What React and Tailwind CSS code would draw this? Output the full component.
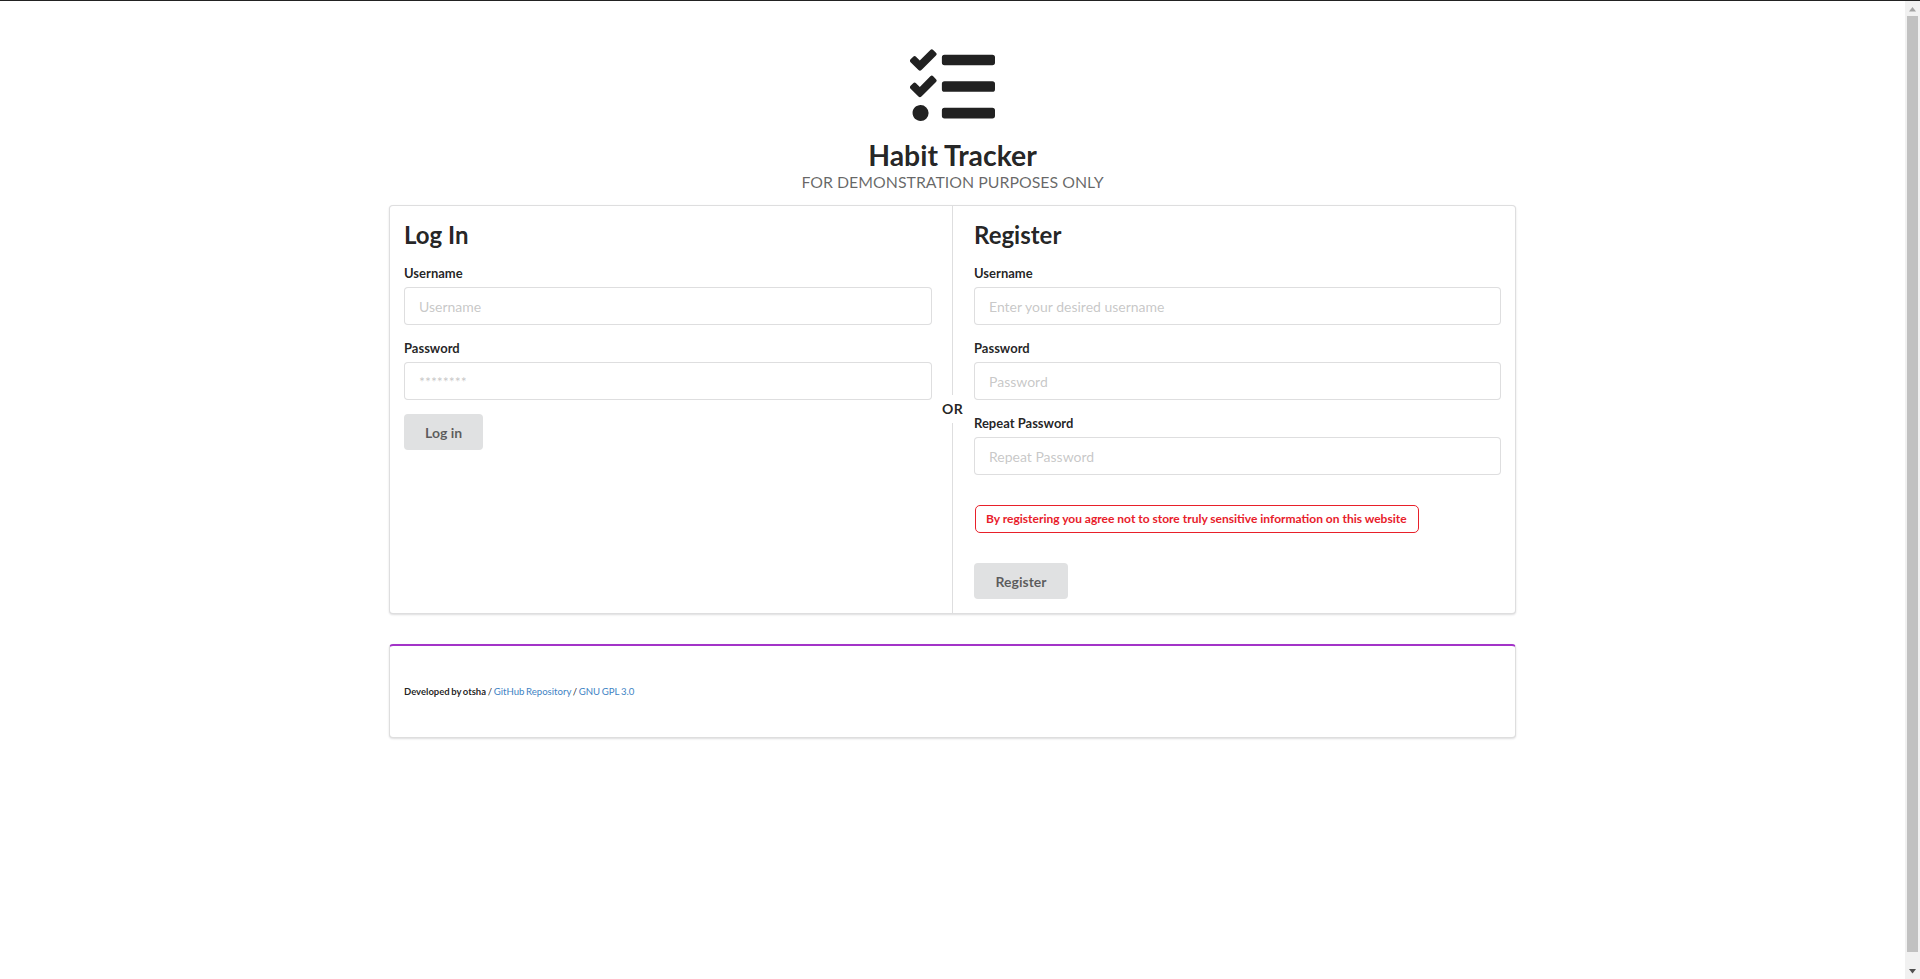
import React from "react";
import { FaTasks } from "react-icons/fa";

const inputCls = "block w-full h-[38px] border border-[rgba(34,36,38,0.15)] rounded-[4px] px-[14px] text-[14px] bg-white outline-none placeholder:text-[rgba(191,191,191,0.87)]";
const labelCls = "block text-[13px] font-bold leading-[18px] mb-[5px] text-[rgba(0,0,0,0.87)]";
const btnCls = "block h-[36px] bg-[#e0e1e2] rounded-[4px] text-[14px] font-bold text-[rgba(0,0,0,0.6)]";
const segCls = "border border-[rgba(34,36,38,0.15)] rounded-[4px] shadow-[0_1px_2px_0_rgba(34,36,38,0.15)] bg-white";

function Field({ label, placeholder, className = "" }) {
  return (
    <div className={className}>
      <label className={labelCls}>{label}</label>
      <input className={inputCls} placeholder={placeholder} readOnly />
    </div>
  );
}

export default function App() {
  return (
    <div className="h-[979px] w-full overflow-hidden flex flex-col bg-white text-[rgba(0,0,0,0.87)] font-['Lato',sans-serif]">
      <div className="h-px bg-[#222] shrink-0" />
      <div className="flex flex-1 min-h-0">
        <main className="flex-1 min-w-0">
          <div className="w-[1127px] mx-auto pt-[43px]">
            <div className="flex flex-col items-center">
              <FaTasks size={85} color="#212121" />
              <h1 className="text-[28.4px] font-bold leading-[36px] mt-[8px]">Habit Tracker</h1>
              <p className="text-[15.9px] leading-[17px] text-[rgba(0,0,0,0.6)] uppercase">For demonstration purposes only</p>
            </div>
            <div className={segCls + " relative flex h-[409px] mt-[15px]"}>
              <section className="w-[562px] pl-[14px] pr-[20px] pt-[14px]">
                <h2 className="text-[24px] font-bold leading-[30px] mb-[14px]">Log In</h2>
                <Field label="Username" placeholder="Username" />
                <Field label="Password" placeholder="********" className="mt-[14px]" />
                <button className={btnCls + " px-[21px] mt-[14px]"}>Log in</button>
              </section>
              <div className="w-px bg-[rgba(34,36,38,0.15)]" />
              <section className="flex-1 pl-[21px] pr-[14px] pt-[14px]">
                <h2 className="text-[24px] font-bold leading-[30px] mb-[14px]">Register</h2>
                <Field label="Username" placeholder="Enter your desired username" />
                <Field label="Password" placeholder="Password" className="mt-[14px]" />
                <Field label="Repeat Password" placeholder="Repeat Password" className="mt-[14px]" />
                <div className="mt-[30px] ml-px inline-block border border-[#e8202a] rounded-[5px] h-[28px] pl-[10px] pr-[11px] text-[12px] leading-[26px] font-bold text-[#e8202a]">
                  By registering you agree not to store truly sensitive information on this website
                </div>
                <button className={btnCls + " w-[94px] mt-[30px]"}>Register</button>
              </section>
              <div className="absolute left-[562.5px] top-[189px] -translate-x-1/2 bg-white h-[28px] py-[4px] text-[14px] font-bold leading-[20px] tracking-[0.3px]">OR</div>
            </div>
            <div className={segCls + " mt-[30px] h-[94px] border-t-2 border-t-[#a333c8] flex items-center px-[14px] pt-[2px]"}>
              <p className="text-[9.6px] [word-spacing:-0.8px]">
                <span className="text-[9.5px] font-bold">Developed by otsha</span> / <a className="text-[#4183c4]">GitHub Repository</a> / <a className="text-[#4183c4]">GNU GPL 3.0</a>
              </p>
            </div>
          </div>
        </main>
        <div className="w-[15px] shrink-0 bg-[#f1f1f1] flex flex-col items-center">
          <svg width="15" height="15" viewBox="0 0 15 15" className="shrink-0"><path d="M4 10.5 L7.5 6 L11 10.5 Z" fill="#a3a3a3" /></svg>
          <div className="w-[11px] flex-1 bg-[#c1c1c1]" />
          <svg width="15" height="27" viewBox="0 0 15 27" className="shrink-0"><path d="M4 17 L11 17 L7.5 21.5 Z" fill="#505050" /></svg>
        </div>
      </div>
    </div>
  );
}
